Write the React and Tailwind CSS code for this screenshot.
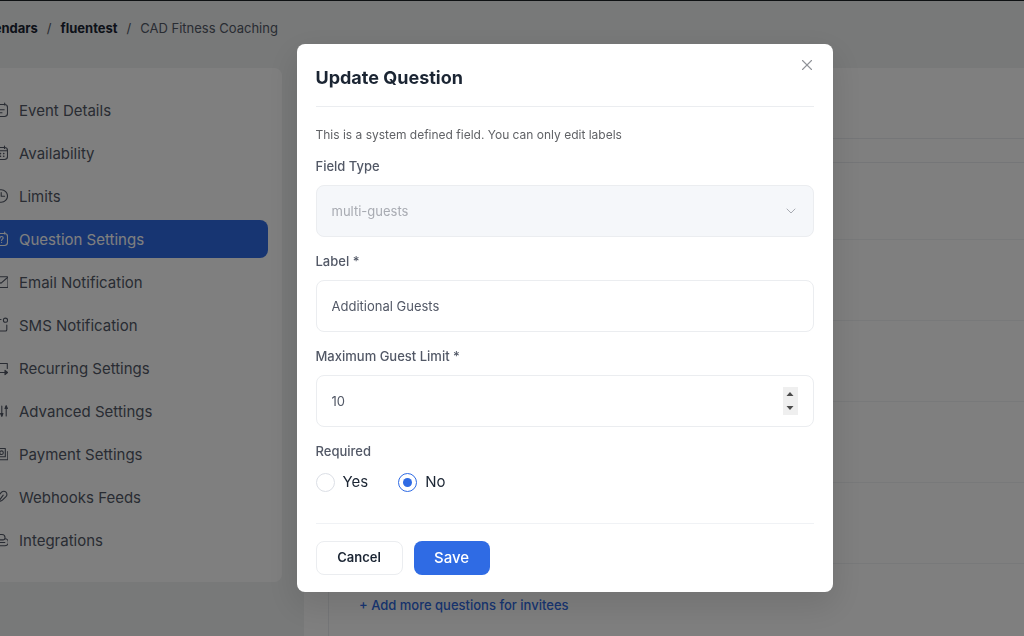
import React, { useState } from "react";
import { LuX, LuChevronDown } from "react-icons/lu";

const Icon = ({ children }) => (
  <svg
    viewBox="0 0 16 16"
    className="w-4 h-4 shrink-0"
    fill="none"
    stroke="currentColor"
    strokeWidth="1.1"
    strokeLinecap="round"
    strokeLinejoin="round"
    aria-hidden="true"
  >
    {children}
  </svg>
);

const navItems = [
  {
    label: "Event Details",
    icon: (
      <Icon>
        <rect x="1.5" y="2.5" width="14" height="12" rx="3" />
        <path d="M4.5 1v2M12.7 1v2M5 7.8h7.2M5 10.8h5" />
      </Icon>
    ),
  },
  {
    label: "Availability",
    icon: (
      <Icon>
        <rect x="1.5" y="2.5" width="14" height="12" rx="3" />
        <path d="M4.5 1v2.5M12.5 1v2.5M1.5 5.8h14" />
        <path
          d="M5 8.6h.1M8.4 8.6h.1M11.7 8.6h.1M5 11.3h.1M8.4 11.3h.1M11.7 11.3h.1"
          strokeWidth="1.6"
        />
      </Icon>
    ),
  },
  {
    label: "Limits",
    icon: (
      <Icon>
        <circle cx="9.2" cy="8" r="6.3" />
        <path d="M9.2 4.5V8.2h3.4" />
      </Icon>
    ),
  },
  {
    label: "Question Settings",
    active: true,
    icon: (
      <Icon>
        <rect x="1.5" y="2.5" width="14" height="12" rx="3" />
        <path d="M4.5 1v2M12.7 1v2M8 7c0-2 3.2-2 3.2 0 0 1.2-1.6 1.1-1.6 2.4M9.6 11.4v.1" />
      </Icon>
    ),
  },
  {
    label: "Email Notification",
    icon: (
      <Icon>
        <rect x="1" y="2.7" width="15" height="10.8" rx="1" />
        <path d="m3.5 5 5.3 4.3L15.5 3.5" />
      </Icon>
    ),
  },
  {
    label: "SMS Notification",
    icon: (
      <Icon>
        <circle cx="13.5" cy="3.2" r="2.1" />
        <path d="M9 2.5H3.5a2 2 0 0 0-2 2v9.5H13.5a1.3 1.3 0 0 0 1.3-1.3V8" />
      </Icon>
    ),
  },
  {
    label: "Recurring Settings",
    icon: (
      <Icon>
        <path d="M1.5 8V3.5h13.8v5M1.5 12.5h13.5" />
        <path d="m13 10.3 2.6 2.2-2.6 2.2z" fill="currentColor" />
      </Icon>
    ),
  },
  {
    label: "Advanced Settings",
    icon: (
      <Icon>
        <path d="M3.5 3v10M9.8 3v10M14.2 3v10" />
        <path d="M8.6 10.5h2.4l-1.2 2.8zM13 5.5h2.4l-1.2-2.8z" fill="currentColor" />
      </Icon>
    ),
  },
  {
    label: "Payment Settings",
    icon: (
      <Icon>
        <path d="M1.5 2.5h11.8v8.3H1.5z" />
        <path d="M15.8 5.5v8.3H3" />
        <circle cx="9.5" cy="6.7" r="1.8" />
      </Icon>
    ),
  },
  {
    label: "Webhooks Feeds",
    icon: (
      <Icon>
        <path d="M5.8 7.2 9.6 3.2a3.1 3.1 0 0 1 4.4 4.4l-3.6 3.6a3.1 3.1 0 0 1-2.6.9" />
        <path d="M11.2 6.2 6.6 12.4a3.1 3.1 0 0 1-4.9-3.9L3.5 6" />
      </Icon>
    ),
  },
  {
    label: "Integrations",
    icon: (
      <Icon>
        <path d="M3 7.8V5a2.5 2.5 0 0 1 2.5-2.5H10a3 3 0 0 1 3 3v.6a1.8 1.8 0 0 1-1.8 1.8H6" />
        <path d="M13 6.8a3.5 3.5 0 0 1-.2 7H4a2.6 2.6 0 0 1-1-5M6 10.5h6.8" />
      </Icon>
    ),
  },
];

const labelClass = "block text-[13px] leading-5 font-medium text-[#525866]";
const fieldClass =
  "w-full h-13 px-[15px] rounded-lg border border-[#ebedf0] text-[13px] leading-5 outline-none";

const Breadcrumb = () => (
  <nav
    aria-label="Breadcrumb"
    className="flex items-center gap-[9px] h-[67px] pb-3.5 -ml-[27px] text-[13px] leading-5 text-[#525866]"
  >
    <a href="#calendars" className="font-bold text-[#1b2533]">
      Calendars
    </a>
    <span>/</span>
    <a href="#fluentest" className="font-bold text-[#1b2533]">
      fluentest
    </a>
    <span>/</span>
    <span>CAD Fitness Coaching</span>
  </nav>
);

const Sidebar = () => (
  <aside className="w-[314px] shrink-0 self-start rounded-lg bg-white px-3.5 py-[23px]">
    <nav className="flex flex-col gap-[5px]">
      {navItems.map((item) => (
        <a
          key={item.label}
          href="#settings"
          className={`flex items-center gap-[11px] h-[38px] px-2.5 rounded-lg text-[15px] leading-5 ${
            item.active ? "bg-[#2f6be4] text-white" : "text-[#525866]"
          }`}
        >
          {item.icon}
          <span className="pt-px">{item.label}</span>
        </a>
      ))}
    </nav>
  </aside>
);

const QuestionList = () => (
  <section className="flex-1 rounded-tl-lg bg-white">
    <div className="h-[71px] border-b border-[#ebedf0]" />
    <div className="mt-[23px] ml-6 border-l border-t border-[#ebedf0]">
      {[1, 2, 3, 4, 5].map((row) => (
        <div
          key={row}
          className="h-[81px] border-b border-[#f0f2f5] first:h-[77px]"
        />
      ))}
      <div className="h-24 pt-7 pl-[30px]">
        <button
          type="button"
          className="text-[13px] leading-5 font-medium text-[#2f6be4]"
        >
          + Add more questions for invitees
        </button>
      </div>
    </div>
  </section>
);

const NumberInput = ({ id, value, onChange }) => (
  <div className="relative">
    <input
      id={id}
      type="number"
      value={value}
      onChange={(e) => onChange(Number(e.target.value))}
      className={`${fieldClass} text-[#525866] [appearance:textfield] [&::-webkit-inner-spin-button]:appearance-none`}
    />
    <div className="absolute right-4 top-3 w-[15px] h-7 flex flex-col bg-[#efefef] text-[#4b4b4b]">
      <button
        type="button"
        aria-label="Increase"
        className="flex-1 flex items-center justify-center"
        onClick={() => onChange(value + 1)}
      >
        <svg viewBox="0 0 8 4" className="w-2 h-1" fill="currentColor">
          <path d="M4 0 7.5 4h-7z" />
        </svg>
      </button>
      <button
        type="button"
        aria-label="Decrease"
        className="flex-1 flex items-center justify-center"
        onClick={() => onChange(value - 1)}
      >
        <svg viewBox="0 0 8 4" className="w-2 h-1" fill="currentColor">
          <path d="M4 4 .5 0h7z" />
        </svg>
      </button>
    </div>
  </div>
);

const UpdateQuestionModal = () => {
  const [label, setLabel] = useState("Additional Guests");
  const [limit, setLimit] = useState(10);
  const [required, setRequired] = useState("No");

  return (
    <div
      role="dialog"
      aria-labelledby="modal-title"
      className="relative w-full max-w-[536px] px-[19px] pt-5 pb-[17px] rounded-lg bg-white shadow-[0_12px_32px_4px_rgba(0,0,0,0.1)]"
    >
      <button
        type="button"
        aria-label="Close"
        className="absolute top-3 right-[17px] text-[#909399]"
      >
        <LuX className="w-[18px] h-[18px]" strokeWidth={1.5} />
      </button>

      <h2
        id="modal-title"
        className="pb-3.5 border-b border-[#ebedf0] text-[18px] leading-7 font-bold text-[#1b2533]"
      >
        Update Question
      </h2>

      <form className="pt-[18px]" onSubmit={(e) => e.preventDefault()}>
        <p className="text-[12px] leading-5 text-[#606266]">
          This is a system defined field. You can only edit labels
        </p>

        <div className="mt-[11px] flex flex-col gap-3.5">
          <div className="flex flex-col gap-[9px]">
            <label htmlFor="field-type" className={labelClass}>
              Field Type
            </label>
            <div className="relative">
              <select
                id="field-type"
                disabled
                className={`${fieldClass} appearance-none bg-[#f5f7fa] text-[#a8abb2] opacity-100`}
              >
                <option>multi-guests</option>
              </select>
              <LuChevronDown
                className="absolute right-[15px] top-[18px] w-4 h-4 text-[#a8abb2]"
                strokeWidth={1.5}
              />
            </div>
          </div>

          <div className="flex flex-col gap-[9px]">
            <label htmlFor="label" className={labelClass}>
              Label *
            </label>
            <input
              id="label"
              type="text"
              value={label}
              onChange={(e) => setLabel(e.target.value)}
              className={`${fieldClass} text-[#525866]`}
            />
          </div>

          <div className="flex flex-col gap-[9px]">
            <label htmlFor="limit" className={labelClass}>
              Maximum Guest Limit *
            </label>
            <NumberInput id="limit" value={limit} onChange={setLimit} />
          </div>

          <fieldset>
            <legend className={labelClass}>Required</legend>
            <div className="mt-[11px] flex items-center gap-[30px]">
              {["Yes", "No"].map((option) => (
                <label
                  key={option}
                  className="flex items-center gap-2 text-[15px] leading-5 text-[#1b2533]"
                >
                  <input
                    type="radio"
                    name="required"
                    value={option}
                    checked={required === option}
                    onChange={() => setRequired(option)}
                    className="appearance-none grid place-items-center w-[19px] h-[19px] rounded-full border border-[#dcdfe6] checked:border-[#2f6be4] checked:before:content-[''] checked:before:w-[9px] checked:before:h-[9px] checked:before:rounded-full checked:before:bg-[#2f6be4]"
                  />
                  {option}
                </label>
              ))}
            </div>
          </fieldset>
        </div>

        <div className="mt-[31px] pt-[17px] flex gap-[11px] border-t border-[#f0f2f5]">
          <button
            type="button"
            className="w-[87px] h-[34px] rounded-lg border border-[#ebedf0] text-[13px] font-semibold text-[#1b2533]"
          >
            Cancel
          </button>
          <button
            type="submit"
            className="w-[76px] h-[34px] rounded-lg bg-[#2f6be4] text-[15px] font-medium text-white"
          >
            Save
          </button>
        </div>
      </form>
    </div>
  );
};

const App = () => {
  return (
    <div className="h-screen overflow-hidden border-t border-[#1d2327] bg-[#f0f2f2] font-['Inter',sans-serif] antialiased">
      <Breadcrumb />
      <div className="-ml-8 flex gap-[22px]">
        <Sidebar />
        <QuestionList />
      </div>

      <div className="fixed inset-0 pt-11 pl-[105px] flex items-start justify-center bg-black/50">
        <UpdateQuestionModal />
      </div>
    </div>
  );
};

export default App;
